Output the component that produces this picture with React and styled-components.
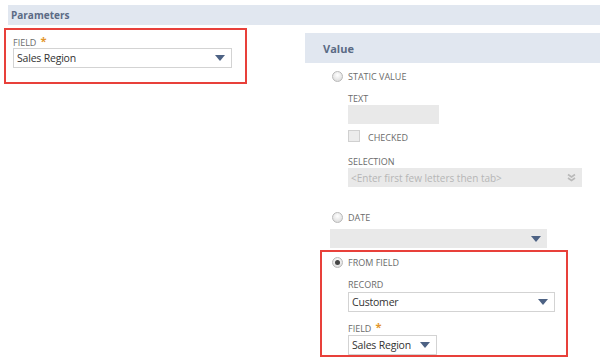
import React from "react";
import styled, { createGlobalStyle } from "styled-components";

const GlobalStyle = createGlobalStyle`
  html, body {
    margin: 0;
    padding: 0;
    background: #ffffff;
  }
  body {
    font-family: "Open Sans", "Liberation Sans", sans-serif;
  }
`;

const Page = styled.div`
  width: 600px;
  height: 360px;
  overflow: hidden;
  background: #fff;
  padding-top: 5px;
  box-sizing: border-box;
`;

const SectionBar = styled.div`
  margin-left: 8px;
  height: 20px;
  background: #e1e7f0;
  display: flex;
  align-items: center;
  padding-left: 3px;
  font-size: 10px;
  font-weight: 700;
  color: #5b6b85;
`;

const Columns = styled.div`
  display: flex;
  margin-top: 3px;
`;

const LeftColumn = styled.div`
  width: 305px;
  flex-shrink: 0;
  padding-left: 4px;
  box-sizing: border-box;
`;

const RightColumn = styled.div`
  flex: 1;
  display: flex;
  flex-direction: column;
`;

const Highlight = styled.div`
  border: 2px solid #e8403a;
  box-sizing: border-box;
  width: ${(p) => p.$w}px;
  height: ${(p) => p.$h}px;
  padding: ${(p) => p.$pad};
  margin-left: ${(p) => p.$ml || 0}px;
  margin-top: ${(p) => p.$mt || 0}px;
`;

const Label = styled.div`
  height: 12px;
  line-height: 12px;
  font-size: 9px;
  color: #6b6b6b;
  text-transform: uppercase;
  margin-top: ${(p) => p.$mt || 0}px;
  white-space: nowrap;
`;

const Star = styled.span`
  color: #e3962b;
  font-size: 11px;
  font-weight: 700;
  margin-left: 4px;
  position: relative;
  top: -1px;
`;

const Select = styled.div`
  width: ${(p) => p.$w}px;
  height: 20px;
  box-sizing: border-box;
  border: 1px solid #d3d3d3;
  background: #fff;
  display: flex;
  align-items: center;
  justify-content: space-between;
  gap: 6px;
  padding: 0 6px 0 3px;
  font-size: 10.5px;
  letter-spacing: -0.2px;
  white-space: nowrap;
  color: #333;
  margin-left: ${(p) => p.$ml || 0}px;
  margin-top: ${(p) => p.$mt || 0}px;
`;

const Disabled = styled.div`
  width: ${(p) => p.$w}px;
  height: 19px;
  box-sizing: border-box;
  background: #e9e9e9;
  display: flex;
  align-items: center;
  justify-content: space-between;
  padding: 0 6px 0 3px;
  font-size: 10px;
  white-space: nowrap;
  color: #b6b6b6;
  margin-left: ${(p) => p.$ml || 0}px;
  margin-top: ${(p) => p.$mt || 0}px;
`;

const Arrow = styled.span`
  flex-shrink: 0;
  width: 0;
  height: 0;
  border-left: 5px solid transparent;
  border-right: 5px solid transparent;
  border-top: 6px solid #4d6284;
`;

const ValueBar = styled.div`
  margin-top: 5px;
  height: 30px;
  background: #e1e7f0;
  display: flex;
  align-items: center;
  padding-left: 18px;
  font-size: 11px;
  font-weight: 700;
  color: #5b6b85;
`;

const RadioRow = styled.div`
  display: flex;
  align-items: center;
  height: 13px;
  margin-left: ${(p) => p.$ml}px;
  margin-top: ${(p) => p.$mt}px;
  font-size: 9px;
  color: #6b6b6b;
  gap: 5px;
`;

const RadioDot = styled.span`
  width: 11px;
  height: 11px;
  box-sizing: border-box;
  border-radius: 50%;
  border: 1px solid #b9b9b9;
  background: radial-gradient(circle at 50% 35%, #ffffff 0%, #e2e2e2 70%, #cfcfcf 100%);
  display: flex;
  align-items: center;
  justify-content: center;
  &::after {
    content: "";
    width: 5px;
    height: 5px;
    border-radius: 50%;
    background: ${(p) => (p.$checked ? "#444" : "transparent")};
  }
`;

const Indent = styled.div`
  padding-left: ${(p) => p.$pl}px;
  display: flex;
  flex-direction: column;
`;

const CheckRow = styled.div`
  display: flex;
  align-items: flex-end;
  gap: 8px;
  margin-top: 6px;
  height: 14px;
  font-size: 9px;
  color: #6b6b6b;
`;

const CheckBox = styled.span`
  width: 12px;
  height: 12px;
  box-sizing: border-box;
  border: 1px solid #d0d0d0;
  background: #ececec;
  align-self: flex-start;
`;

const DoubleChevron = () => (
  <svg width="9" height="9" viewBox="0 0 9 9">
    <path d="M1 1.5 L4.5 4 L8 1.5" fill="none" stroke="#b9b9b9" strokeWidth="1.6" />
    <path d="M1 5 L4.5 7.5 L8 5" fill="none" stroke="#b9b9b9" strokeWidth="1.6" />
  </svg>
);

export default function App() {
  return (
    <Page>
      <GlobalStyle />
      <SectionBar>Parameters</SectionBar>
      <Columns>
        <LeftColumn>
          <Highlight $w={243} $h={56} $pad="6px 0 0 7px">
            <Label>
              Field<Star>*</Star>
            </Label>
            <Select $w={219}>
              Sales Region
              <Arrow />
            </Select>
          </Highlight>
        </LeftColumn>
        <RightColumn>
          <ValueBar>Value</ValueBar>
          <RadioRow $ml={27} $mt={7}>
            <RadioDot />
            STATIC VALUE
          </RadioRow>
          <Indent $pl={43}>
            <Label $mt={10}>Text</Label>
            <Disabled $w={91} />
            <CheckRow>
              <CheckBox />
              CHECKED
            </CheckRow>
            <Label $mt={12}>Selection</Label>
            <Disabled $w={234}>
              &lt;Enter first few letters then tab&gt;
              <DoubleChevron />
            </Disabled>
          </Indent>
          <RadioRow $ml={27} $mt={24}>
            <RadioDot />
            DATE
          </RadioRow>
          <Disabled $w={217} $ml={25} $mt={5}>
            <span />
            <Arrow />
          </Disabled>
          <Highlight $w={248} $h={107} $ml={15} $mt={2} $pad="4px 0 0 10px">
            <RadioRow $ml={0} $mt={0}>
              <RadioDot $checked />
              FROM FIELD
            </RadioRow>
            <Indent $pl={16}>
              <Label $mt={10}>Record</Label>
              <Select $w={207} $mt={1}>
                Customer
                <Arrow />
              </Select>
              <Label $mt={10}>
                Field<Star>*</Star>
              </Label>
              <Select $w={89} $mt={1}>
                Sales Region
                <Arrow />
              </Select>
            </Indent>
          </Highlight>
        </RightColumn>
      </Columns>
    </Page>
  );
}
